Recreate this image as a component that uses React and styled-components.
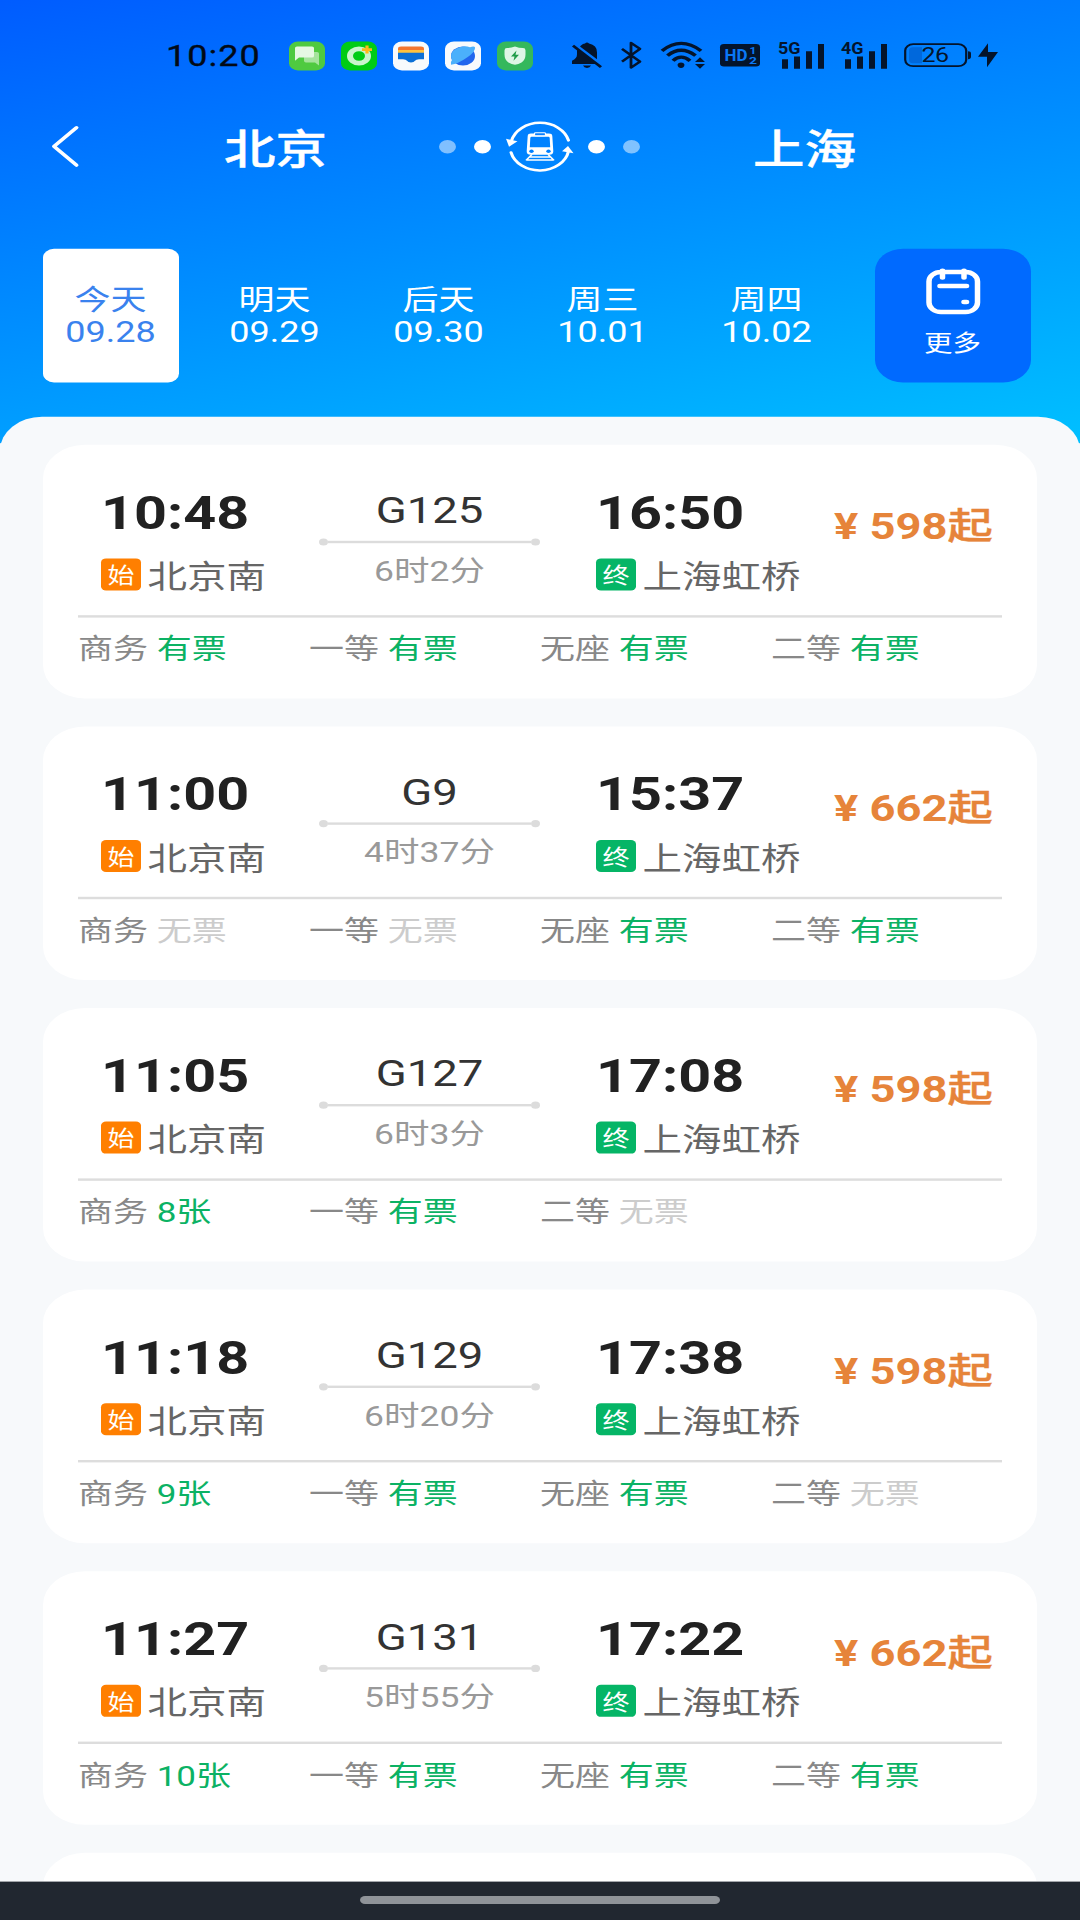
import React from 'react'
import styled, { createGlobalStyle } from 'styled-components'


const GlobalStyle = createGlobalStyle`
  * {
    box-sizing: border-box;
  }
  body {
    margin: 0;
    background-color: #f7f9fb;
    font-family: Roboto, "Noto Sans CJK SC", sans-serif;
  }
`;

const Viewport = styled.div`
  width: 1080px;
  height: 1920px;
  overflow: hidden;
`;

// laid out for a 1080x2400 phone, fitted to a 1920px tall window
const Screen = styled.div`
  width: 1080px;
  height: 2400px;
  display: flex;
  flex-direction: column;
  transform: scaleY(0.8);
  transform-origin: top left;
  background-color: #f7f9fb;
`;

const Header = styled.header`
  flex: none;
  height: 554px;
  background: linear-gradient(166deg, #005cff 0%, #00c0ff 100%);
`;

const StatusBar = styled.div`
  height: 104px;
  padding: 36px 0 0 166px;
  display: flex;
  align-items: center;
`;

const Clock = styled.span`
  width: 123px;
  color: #020a16;
  font-size: 36px;
  font-weight: 400;
  letter-spacing: 1px;
  -webkit-text-stroke: 0.4px #020a16;
`;

const AppIcons = styled.div`
  display: flex;
  gap: 16px;
  margin-right: 39px;
`;

const SystemIcons = styled.div`
  display: flex;
  align-items: center;
  margin-top: -2px;
`;

const Icon = styled.svg`
  display: block;
  flex: none;
  overflow: visible;
  margin-left: ${(p) => p.$left || 0}px;
`;

const NavBar = styled.nav`
  height: 158px;
  display: grid;
  grid-template-columns: 145px 260px 269px 260px;
  align-items: center;
`;

const BackButton = styled.button`
  padding: 0 0 0 51px;
  border: none;
  background: none;
`;

const City = styled.h1`
  margin: 0;
  padding: 9px 0 0 1px;
  color: white;
  font-size: 51.5px;
  font-weight: 500;
  line-height: 60px;
  text-align: center;
  -webkit-text-stroke: 0.5px white;
`;

const Switcher = styled.div`
  display: flex;
  align-items: center;
  justify-content: center;
`;

const SwapIcon = styled(Icon)`
  margin: 0 6px;
`;

const Dot = styled.span`
  width: 17px;
  height: 17px;
  margin: 0 9px;
  border-radius: 50%;
  background-color: white;
  opacity: ${(p) => (p.$faded ? 0.5 : 1)};
`;

const Dates = styled.div`
  display: flex;
  gap: 28px;
  padding: 49px 0 0 43px;
`;

const DateTab = styled.div`
  width: 136px;
  height: 167px;
  padding: 3px 1px 0 0;
  display: flex;
  flex-direction: column;
  align-items: center;
  justify-content: center;
  border-radius: 11px;
  font-size: 36px;
  line-height: 40px;
  color: ${(p) => (p.$active ? '#3a82ee' : 'white')};
  background-color: ${(p) => (p.$active ? 'white' : 'transparent')};
`;

const MoreButton = styled.div`
  width: 156px;
  height: 167px;
  margin-left: 12px;
  padding: 24px 1px 0 0;
  display: flex;
  flex-direction: column;
  align-items: center;
  border-radius: 28px;
  background-color: #006aff;
  color: white;
  font-size: 28.5px;
  line-height: 40px;
  gap: 15px;
`;

const Sheet = styled.main`
  flex: 1;
  min-height: 0;
  overflow: hidden;
  margin-top: -33px;
  padding: 35px 43px 0;
  border-radius: 42px 42px 0 0;
  background-color: #f7f9fb;
`;

const Card = styled.section`
  height: 317px;
  margin-bottom: 35px;
  padding: 0 35px;
  border-radius: 42px;
  background-color: white;
`;

const Trip = styled.div`
  height: 216px;
  display: flex;
  border-bottom: 3px solid #dddddd;
`;

const Stop = styled.div`
  width: ${(p) => p.$width}px;
  padding: 55px 0 0 ${(p) => p.$indent}px;
`;

const Time = styled.div`
  color: #212121;
  font-size: 57.5px;
  font-weight: 700;
  line-height: 61px;
`;

const Station = styled.div`
  display: flex;
  margin-top: 26px;
  gap: 6.5px;
  color: #666666;
  font-size: 39.5px;
  line-height: 48px;
  white-space: nowrap;
`;

const Badge = styled.span`
  width: 40px;
  height: 40px;
  border-radius: 5px;
  background-color: ${(p) => p.$color};
  color: white;
  font-size: 27px;
  line-height: 44px;
  text-align: center;
`;

const Route = styled.div`
  width: 221px;
  padding-top: 58px;
  text-align: center;
`;

const TrainNo = styled.div`
  color: #333333;
  font-size: 45.5px;
  line-height: 49px;
`;

const RouteLine = styled.div`
  display: flex;
  align-items: center;
  height: 9px;
  margin: 10px 0 11px;

  &::before,
  &::after {
    content: '';
    width: 9px;
    height: 9px;
    border-radius: 50%;
    background-color: #dcdcdc;
  }
`;

const Rule = styled.span`
  flex: 1;
  height: 3px;
  background-color: #dcdcdc;
`;

const Duration = styled.div`
  color: #999999;
  font-size: 35.5px;
  line-height: 42px;
`;

const Price = styled.div`
  padding: 78px 0 0 1px;
  color: #e6843a;
  font-size: 45.3px;
  font-weight: 700;
  line-height: 50px;
  white-space: nowrap;
`;

const From = styled.span`
  font-weight: 500;
  -webkit-text-stroke: 0.5px #e6843a;
`;

const Seats = styled.div`
  display: grid;
  grid-template-columns: repeat(4, 231px);
  padding-top: 17px;
  color: #888888;
  font-size: 35px;
  line-height: 48px;
  white-space: nowrap;
`;

const Left = styled.span`
  color: ${(p) => (p.$none ? '#cccccc' : '#0bb264')};
`;

const HomeBar = styled.footer`
  flex: none;
  height: 48px;
  display: flex;
  justify-content: center;
  padding-top: 18px;
  background-color: #212730;
`;

const HomePill = styled.span`
  width: 360px;
  height: 10px;
  border-radius: 5px;
  background-color: #8f9398;
`;


const dates = [
  { day: '今天', date: '09.28' },
  { day: '明天', date: '09.29' },
  { day: '后天', date: '09.30' },
  { day: '周三', date: '10.01' },
  { day: '周四', date: '10.02' },
];

const trains = [
  {
    no: 'G125', start: '10:48', end: '16:50', time: '6时2分', price: 598,
    seats: [['商务', '有票'], ['一等', '有票'], ['无座', '有票'], ['二等', '有票']],
  },
  {
    no: 'G9', start: '11:00', end: '15:37', time: '4时37分', price: 662,
    seats: [['商务', '无票'], ['一等', '无票'], ['无座', '有票'], ['二等', '有票']],
  },
  {
    no: 'G127', start: '11:05', end: '17:08', time: '6时3分', price: 598,
    seats: [['商务', '8张'], ['一等', '有票'], ['二等', '无票']],
  },
  {
    no: 'G129', start: '11:18', end: '17:38', time: '6时20分', price: 598,
    seats: [['商务', '9张'], ['一等', '有票'], ['无座', '有票'], ['二等', '无票']],
  },
  {
    no: 'G131', start: '11:27', end: '17:22', time: '5时55分', price: 662,
    seats: [['商务', '10张'], ['一等', '有票'], ['无座', '有票'], ['二等', '有票']],
  },
];

const ink = '#04142b';

const MessagesIcon = () => (
  <Icon width="36" height="36" viewBox="0 0 36 36">
    <rect width="36" height="36" rx="9" fill="#4fca40" />
    <path d="M15 13h13q2 0 2 2v15l-4-4H17q-2 0-2-2z" fill="#a5e39c" />
    <path d="M8 6h15q2 0 2 2v10q0 2-2 2H10l-4 4V8q0-2 2-2z" fill="#e6f8e3" />
  </Icon>
);

const RingIcon = () => (
  <Icon width="36" height="36" viewBox="0 0 36 36">
    <rect width="36" height="36" rx="9" fill="#00cc14" />
    <circle cx="18" cy="18" r="9" fill="none" stroke="#c9f5cc" strokeWidth="6" />
    <path d="M26 5v10M21 10h10" stroke="#ffb91a" strokeWidth="3.2" />
  </Icon>
);

const WalletIcon = () => (
  <Icon width="36" height="36" viewBox="0 0 36 36">
    <rect width="36" height="36" rx="9" fill="#f8fafc" />
    <path d="M5 9q0-3 3-3h20q3 0 3 3v2H5z" fill="#f4762f" />
    <path d="M5 10.500h26v5H5z" fill="#ffc23c" />
    <path d="M5 14h26v8h-5q-3 0-4 2-1 2-4 2t-4-2q-1-2-4-2H5z" fill="#0b6fd6" />
  </Icon>
);

const PlanetIcon = () => (
  <Icon width="36" height="36" viewBox="0 0 36 36">
    <rect width="36" height="36" rx="9" fill="#f8fafc" />
    <circle cx="18" cy="18" r="12" fill="#2166ee" />
    <path d="M6 29q-1-3 1-6Q4 14 11 9q7-5 14-2 4-2 5 0 1 5-8 13T6 29z" fill="#4bb0fb" />
  </Icon>
);

const ShieldIcon = () => (
  <Icon width="36" height="36" viewBox="0 0 36 36">
    <rect width="36" height="36" rx="9" fill="#35b85c" />
    <path d="M18 6q4 2 8 2 2.500 0 2.500 3v5q0 7-4 10-3 2-6.500 3-3.500-1-6.500-3-4-3-4-10v-5q0-3 2.500-3 4 0 8-2z" fill="#def6e5" />
    <path d="M19.500 11l-5.500 7.500h3.500L16.500 24l5.500-7.500h-3.500z" fill="#1f9c48" />
  </Icon>
);

const BellOffIcon = () => (
  <Icon width="30" height="34" viewBox="0 0 30 34">
    <path d="M9 5q2-2.500 4-2.500Q15 0 17 2.500q8 2 8 11V22L8 6zM5 10l19 18H0v-4q5-3 5-8z" fill={ink} />
    <path d="M11 30h8q-1 3-4 3t-4-3z" fill={ink} />
    <path d="M1 5l28 27" stroke={ink} strokeWidth="3" />
  </Icon>
);

const BluetoothIcon = () => (
  <Icon $left="19" width="20" height="34" viewBox="0 0 20 34">
    <path d="M1 9l18 16-9 7.500V1.500L19 9 1 25" fill="none" stroke={ink} strokeWidth="2.800" strokeLinejoin="round" />
  </Icon>
);

const WifiIcon = () => (
  <Icon $left="20" width="44" height="34" viewBox="0 0 44 34">
    <g fill="none" stroke={ink} strokeWidth="4">
      <path d="M1 11.500Q20-7 40 11.500" />
      <path d="M6.500 17.500Q20 4 34.500 17.500" />
      <path d="M12 24Q20 15 29 24" />
    </g>
    <path d="M20 26q3 0 3.500 3-.500 4-3.500 4t-3.500-4q.5-3 3.500-3z" fill={ink} />
    <path d="M34 25.500l5-6 5 6zM34 28l5 6 5-6z" fill={ink} />
  </Icon>
);

const HdIcon = () => (
  <Icon $left="15" width="40" height="28" viewBox="0 0 40 28">
    <rect width="40" height="28" rx="4" fill={ink} />
    <g fill="#0a78f5" fontFamily="Roboto" fontWeight="700">
      <text x="4.500" y="21.500" fontSize="21" textLength="23" lengthAdjust="spacingAndGlyphs">HD</text>
      <text x="29.500" y="13" fontSize="12">1</text>
      <text x="29" y="25.500" fontSize="12" textLength="8" lengthAdjust="spacingAndGlyphs">2</text>
    </g>
  </Icon>
);

const SignalIcon = ({ label, left }) => (
  <Icon $left={left} width="47" height="33" viewBox="0 0 47 33">
    <text x="0" y="14.500" fontFamily="Roboto" fontWeight="700" fontSize="21" textLength="22.500" lengthAdjust="spacingAndGlyphs" fill={ink}>{label}</text>
    <path d="M4 21h6v12H4zM16 17.500h6V33h-6zM28 11h6v22h-6zM40 2h6v31h-6z" fill={ink} />
  </Icon>
);

const BatteryIcon = () => (
  <Icon $left="16" width="67" height="30" viewBox="0 0 67 30">
    <rect x="1.200" y="1.200" width="61" height="27.600" rx="8" fill="none" stroke={ink} strokeWidth="2.200" />
    <path d="M9 5h9v20H9q-4 0-4-4V9q0-4 4-4z" fill="#0068dc" />
    <text x="17.500" y="23.500" fontFamily="Roboto" fontSize="25" textLength="27.500" fill={ink}>26</text>
    <path d="M64 10q3 0 3 3v4q0 3-3 3z" fill={ink} />
  </Icon>
);

const BoltIcon = () => (
  <Icon $left="7" width="20" height="30" viewBox="0 0 20 30">
    <path d="M10 0v11h10L9 30V17H0z" fill={ink} />
  </Icon>
);

const TrainSwitchIcon = () => (
  <SwapIcon width="67" height="64" viewBox="0 0 67 64">
    <g fill="none" stroke="white" strokeWidth="3.100" strokeLinecap="round">
      <path d="M5.500 25A29.400 29.400 0 0 1 62.500 24.500" />
      <path d="M5 39.500A29.400 29.400 0 0 0 62.500 38" />
    </g>
    <path d="M0 22.500l11.500 3L3 32.500z" fill="white" />
    <path d="M62 31.500l5.500 9-11.500-2.500z" fill="white" />
    <path
      fill="white"
      fillRule="evenodd"
      d="M25 16h18q3 0 3.300 3l1 19q0 4.500-4 4.500H25q-4.500 0-4.300-4.500l1-19q.3-3 3.300-3zM25.500 20q-1 0-1.200 1.500l-.5 11.500h20.400L43.700 21.500q-.2-1.500-1.200-1.500z"
    />
    <rect x="28.500" y="15" width="11" height="3.600" rx="1" fill="#0a80ff" stroke="white" strokeWidth="1.200" />
    <circle cx="25.500" cy="38" r="2.200" fill="#0080ff" />
    <circle cx="42.500" cy="38" r="2.200" fill="#0080ff" />
    <path d="M26 42l-6 7.500M42 42l6 7.500M24 45.300h20M20 49h28" stroke="white" strokeWidth="1.800" />
  </SwapIcon>
);

const CalendarIcon = () => (
  <Icon width="54" height="60" viewBox="0 0 54 60">
    <g fill="none" stroke="white" strokeWidth="5.500" strokeLinecap="round">
      <rect x="3" y="5" width="48.500" height="50" rx="12" />
      <path d="M16.500 3.500v8.500M38 3.500v8.500M14 22.500h26.500M38 42.500h2.500" />
    </g>
  </Icon>
);

const Train = ({ item }) => {
  return (
    <Card>
      <Trip>
        <Stop $width={241} $indent={23}>
          <Time>{item.start}</Time>
          <Station><Badge $color="#ff7f00">始</Badge>北京南</Station>
        </Stop>
        <Route>
          <TrainNo>{item.no}</TrainNo>
          <RouteLine><Rule /></RouteLine>
          <Duration>{item.time}</Duration>
        </Route>
        <Stop $width={293} $indent={56}>
          <Time>{item.end}</Time>
          <Station><Badge $color="#05b566">终</Badge>上海虹桥</Station>
        </Stop>
        <Price>¥ {item.price}<From>起</From></Price>
      </Trip>
      <Seats>
        {item.seats.map(([name, left]) => (
          <span key={name}>{name} <Left $none={left === '无票'}>{left}</Left></span>
        ))}
      </Seats>
    </Card>
  )
}

const App = () => {
  return (
    <Viewport>
      <GlobalStyle />
      <Screen>
        <Header>
          <StatusBar>
            <Clock>10:20</Clock>
            <AppIcons>
              <MessagesIcon />
              <RingIcon />
              <WalletIcon />
              <PlanetIcon />
              <ShieldIcon />
            </AppIcons>
            <SystemIcons>
              <BellOffIcon />
              <BluetoothIcon />
              <WifiIcon />
              <HdIcon />
              <SignalIcon label="5G" left={18} />
              <SignalIcon label="4G" left={16} />
              <BatteryIcon />
              <BoltIcon />
            </SystemIcons>
          </StatusBar>
          <NavBar>
            <BackButton>
              <Icon width="28" height="52" viewBox="0 0 28 52">
                <path d="M25.500 2.500L3 26l22.500 23.500" fill="none" stroke="white" strokeWidth="4" strokeLinecap="round" strokeLinejoin="round" />
              </Icon>
            </BackButton>
            <City>北京</City>
            <Switcher>
              <Dot $faded />
              <Dot />
              <TrainSwitchIcon />
              <Dot />
              <Dot $faded />
            </Switcher>
            <City>上海</City>
          </NavBar>
          <Dates>
            {dates.map((d, i) => (
              <DateTab key={d.date} $active={i === 0}>
                <span>{d.day}</span>
                <span>{d.date}</span>
              </DateTab>
            ))}
            <MoreButton>
              <CalendarIcon />
              更多
            </MoreButton>
          </Dates>
        </Header>
        <Sheet>
          {trains.map((item) => (
            <Train key={item.no} item={item} />
          ))}
          <Card />
        </Sheet>
        <HomeBar>
          <HomePill />
        </HomeBar>
      </Screen>
    </Viewport>
  )
}

export default App
